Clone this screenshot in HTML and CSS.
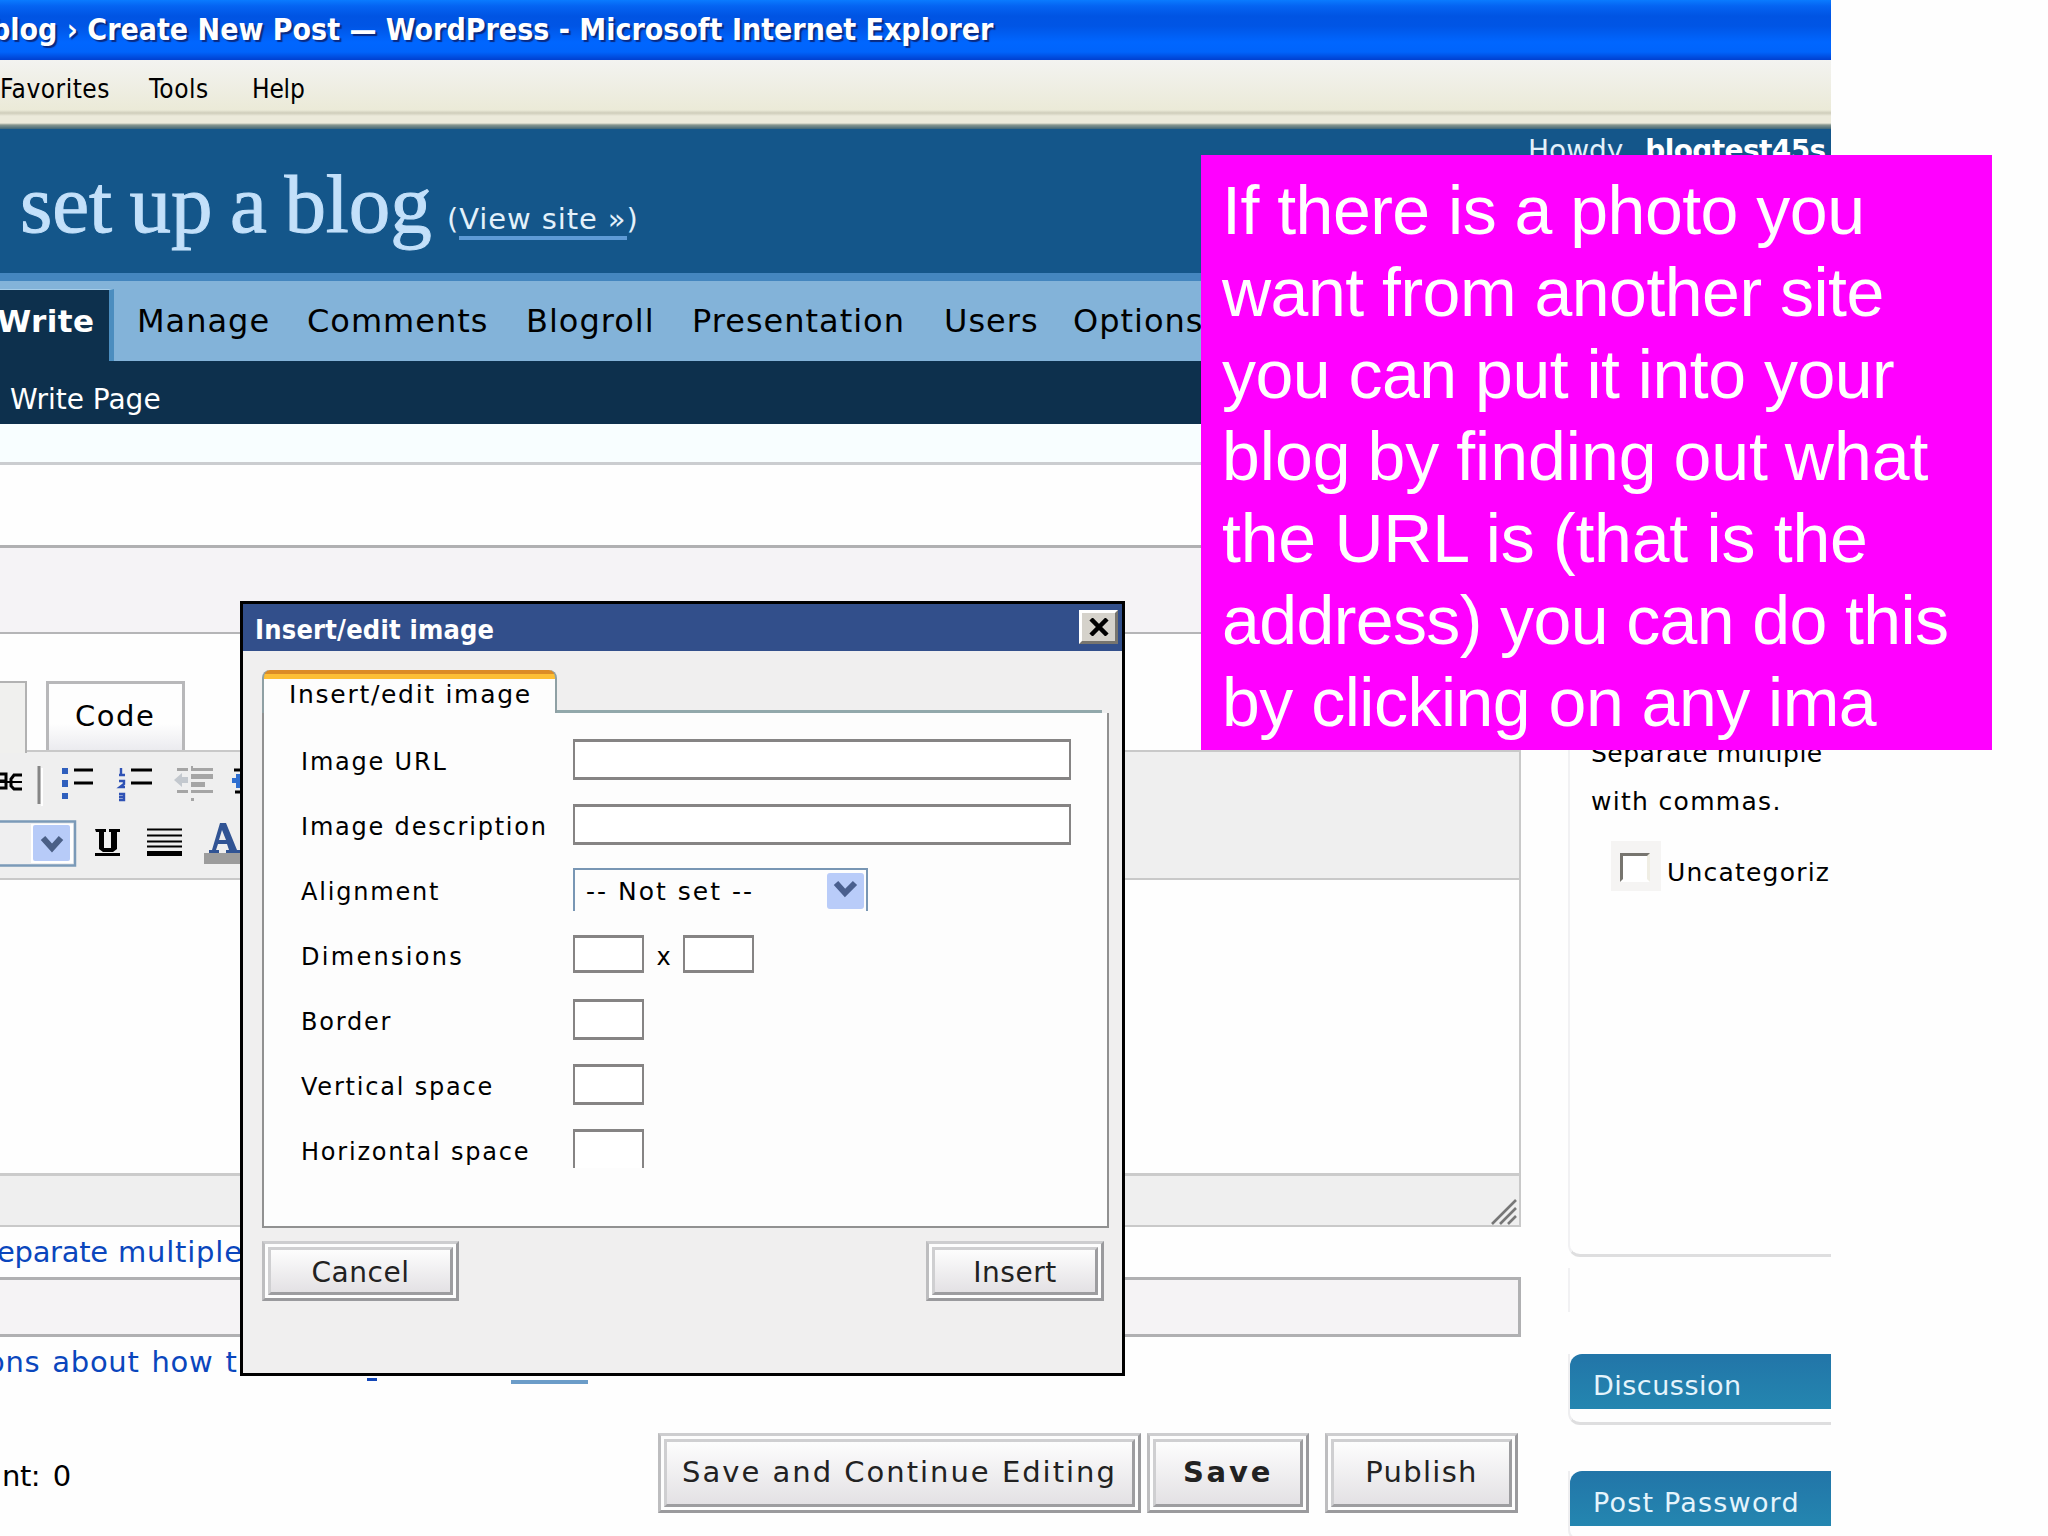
FILE: index.html
```html
<!DOCTYPE html>
<html lang="en">
<head>
  <meta charset="UTF-8">
  <title>Create New Post - WordPress</title>
  <link rel="stylesheet" href="styles.css">
</head>
<body>
  <div class="browser">
    <div class="titlebar"><span>blog › Create New Post — WordPress - Microsoft Internet Explorer</span></div>
    <div class="menubar">
      <span class="m-fav">Favorites</span>
      <span class="m-tools">Tools</span>
      <span class="m-help">Help</span>
    </div>

    <div class="wp-head">
      <h1>o set up a blog</h1>
      <div class="view">(<a>View site »</a>)</div>
      <div class="user">Howdy, <b>blogtest45s</b></div>
    </div>
    <div class="nav">
      <span class="current">Write</span>
      <span class="n1">Manage</span>
      <span class="n2">Comments</span>
      <span class="n3">Blogroll</span>
      <span class="n4">Presentation</span>
      <span class="n5">Users</span>
      <span class="n6">Options</span>
    </div>
    <div class="subnav">Write Page</div>

    <div class="tint"></div>
    <div class="gap-row"></div>
    <div class="title-row"></div>

    <div class="columns">
      <div class="main">
        <div class="tabs">
          <div class="tab-visual"></div>
          <div class="tab-code">Code</div>
        </div>
        <div class="editor">
          <div class="toolbar">
            <svg class="tools" width="240" height="126" viewBox="0 752 240 126">
              <!-- strikethrough -->
              <g fill="none" stroke="#000" stroke-width="3">
                <path d="M0 774h6v14H0M0 781h7M22 775h-8l-3 4v7l3 3h8"/>
                <path d="M0 782h22" stroke-width="2"/>
              </g>
              <path d="M39 766v38" stroke="#858585" stroke-width="3"/>
              <path d="M42 768v38" stroke="#fff" stroke-width="2"/>
              <!-- bullet list -->
              <g fill="#2f5fbd"><rect x="62" y="768" width="6" height="6"/><rect x="62" y="780" width="6" height="7"/><rect x="62" y="793" width="6" height="6"/></g>
              <path d="M74 770h19M74 783h19" stroke="#000" stroke-width="3"/>
              <!-- numbered list -->
              <path d="M121 768v8M119 775h6M119 781h5v3l-4 3h5M119 794h5v6h-5M119 797h5" fill="none" stroke="#2f52b5" stroke-width="2.4"/>
              <path d="M131 770h21M131 783h21" stroke="#000" stroke-width="3"/>
              <!-- outdent -->
              <g fill="#a5a5a5"><rect x="177" y="768" width="11" height="3"/><rect x="191" y="768" width="22" height="3"/><rect x="191" y="774" width="22" height="5"/><rect x="191" y="782" width="14" height="5"/><rect x="177" y="790" width="11" height="3"/><rect x="191" y="790" width="22" height="3"/><rect x="191" y="766" width="2" height="3"/><rect x="191" y="798" width="3" height="3"/></g>
              <path d="M174 780l8-7v4h6v6h-6v4z" fill="#c3c8ce"/>
              <!-- indent, partly under the dialog -->
              <path d="M234 770h6M235 792h5" stroke="#000" stroke-width="3"/>
              <path d="M232 778h4v-4h4v14h-4v-5h-4z" fill="#2f6fd0"/>
              <!-- font select -->
              <path d="M0 821.5h75v44H0" fill="#efeff0" stroke="#7b9ab8" stroke-width="2.5"/>
              <rect x="31" y="824" width="42" height="39" fill="#fff"/>
              <rect x="33" y="825" width="37" height="36" rx="2" fill="#b7cbf8"/>
              <path d="M43 838l9 10 9-10" fill="none" stroke="#4a5f86" stroke-width="6"/>
              <!-- underline -->
              <path d="M95 829h11v3h-2v16h7v-16h-2v-3h11v3h-3v17l-4 3h-10l-4-3v-17h-3zM95 853h25v3H95z" fill="#000"/>
              <!-- justify -->
              <path d="M147 829.500h35M147 835.500h35M147 841.500h35M147 846.500h35" stroke="#000" stroke-width="2"/>
              <path d="M147 853.500h35" stroke="#000" stroke-width="5"/>
              <!-- text colour -->
              <path d="M220 823h6l11 27h3v3h-14v-3h3l-2-6h-9l-2 6h3v3h-10v-3h3zM222 830l-3 10h7z" fill="#315494" fill-rule="evenodd"/>
              <rect x="204" y="853" width="36" height="11" fill="#9c9c9c"/>
            </svg>
          </div>
          <div class="text-area"></div>
          <div class="status">
            <svg width="28" height="28" viewBox="0 0 28 28"><path d="M2 27L26 3M10 27L26 11M18 27l8-8" stroke="#777" stroke-width="2.6"/></svg>
          </div>
        </div>
        <div class="hint hint-tags"><span class="h1a">eparate</span><span class="h1b">multiple</span></div>
        <div class="tags-input"></div>
        <div class="hint hint-ping"><span>ons</span><span>about</span><span>how</span><span>t</span></div>
        <div class="ping-rest"><i class="descender"></i><i class="link-line"></i></div>
        <div class="submit">
          <span class="count"><span>nt:</span> <span class="num">0</span></span>
          <div class="btn b-cont"><span>Save and Continue Editing</span></div>
          <div class="btn b-save"><span>Save</span></div>
          <div class="btn b-pub"><span>Publish</span></div>
        </div>
      </div>

      <div class="side">
        <div class="cats">
          <p>Separate multiple</p>
          <p class="commas">with commas.</p>
          <div class="cat"><span class="check"><i></i></span><span class="cat-name">Uncategoriz</span></div>
        </div>
        <div class="side-stub"></div>
        <div class="box"><div class="box-title"><span class="d1">Discussion</span></div></div>
        <div class="box"><div class="box-title"><span class="d2">Post Password</span></div></div>
      </div>
    </div>
  </div>

  <div class="dialog">
    <div class="dialog-title">
      <span>Insert/edit image</span>
      <div class="close"><svg width="20" height="18" viewBox="0 0 20 18"><path d="M2 1l16 16M18 1L2 17" stroke="#000" stroke-width="4.500"/></svg></div>
    </div>
    <div class="dialog-tabs">
      <div class="dtab"><span>Insert/edit image</span></div>
      <div class="dline"></div>
    </div>
    <div class="panel">
      <div class="row"><label>Image URL</label><div class="input wide"></div></div>
      <div class="row"><label>Image description</label><div class="input wide"></div></div>
      <div class="row"><label>Alignment</label>
        <div class="select"><span>-- Not set --</span>
          <svg width="37" height="36" viewBox="0 0 37 36"><rect width="37" height="36" rx="3" fill="#b9ccf9"/><path d="M9 10l9 10 10-10" fill="none" stroke="#4a5f8e" stroke-width="6"/></svg>
        </div>
      </div>
      <div class="row"><label class="wider">Dimensions</label><div class="input small dim"></div><span class="x">x</span><div class="input small dim"></div></div>
      <div class="row"><label>Border</label><div class="input small"></div></div>
      <div class="row"><label>Vertical space</label><div class="input small"></div></div>
      <div class="row"><label>Horizontal space</label><div class="input small open"></div></div>
    </div>
    <div class="dialog-buttons">
      <div class="btn b-cancel"><span>Cancel</span></div>
      <div class="btn b-insert"><span>Insert</span></div>
    </div>
  </div>

  <div class="note">
    <div>If there is a photo you</div>
    <div>want from another site</div>
    <div>you can put it into your</div>
    <div class="t4">blog by finding out what</div>
    <div class="t5">the URL is (that is the</div>
    <div class="t6">address) you can do this</div>
    <div>by clicking on any ima</div>
  </div>
</body>
</html>
```
FILE: styles.css
```css
* { box-sizing: border-box; }
body {
  margin: 0;
  width: 2048px;
  height: 1536px;
  position: relative;
  overflow: hidden;
  background: #fefefe;
  color: #000;
  font-family: "DejaVu Sans", Verdana, sans-serif;
  white-space: nowrap;
}
.browser {
  width: 1831px;
  height: 1536px;
  overflow: hidden;
}
.titlebar {
  height: 60px;
  background: linear-gradient(#0a7bff 0, #0564f2 6px, #0054e3 16px, #0055e5 26px, #0066ff 42px, #0064fb 52px, #0040d0 60px);
  color: #fff;
  font-family: "DejaVu Sans Condensed", "DejaVu Sans", sans-serif;
  font-stretch: condensed;
  font-size: 30px;
  font-weight: bold;
  line-height: 60px;
  text-shadow: 2px 2px 1px #0a2a80;
}
.titlebar span {
  margin-left: -9px;
}
.menubar {
  height: 69px;
  background: linear-gradient(to bottom, rgba(236,233,216,0) 0, #ebead8 50px, #cfcdbb 53px, #eceadb 56px, #eceadb 63px, #87968f 65px, #3f6678 69px), #f3f3f1;
  display: flex;
  font-family: "DejaVu Sans Condensed", "DejaVu Sans", sans-serif;
  font-stretch: condensed;
  font-size: 26px;
  line-height: 58px;
  letter-spacing: 0.5px;
}
.menubar span { display: block; }
.m-fav { width: 149px; }
.m-tools { width: 103px; }
.menubar .m-help { letter-spacing: -0.2px; }

.wp-head {
  height: 144px;
  background: #14568a;
  display: flex;
  color: #c3e0fa;
}
.wp-head h1 {
  margin: 0 0 0 -39px;
  width: 486px;
  font: 83px/151px "Liberation Serif", serif;
  letter-spacing: -0.1px;
  word-spacing: -3px;
  -webkit-text-stroke: 1px #c3e0fa;
}
.view {
  width: 1081px;
  padding-top: 73px;
  font-size: 29px;
  line-height: 34px;
  letter-spacing: 0.9px;
  color: #e3f1fb;
}
.view a {
  display: inline-block;
  height: 38px;
  border-bottom: 4px solid #5f9bd6;
}
.user {
  font-size: 28px;
  line-height: 43px;
  color: #e3f1fb;
}
.user b {
  color: #fff;
  margin-left: 4px;
  letter-spacing: -0.6px;
}
.nav {
  height: 88px;
  border-top: 8px solid #4486bf;
  background: #83b3d9;
  display: flex;
  font-size: 32px;
  line-height: 80px;
  letter-spacing: 1px;
}
.nav .current {
  width: 114px;
  height: 72px;
  margin: 8px 23px 0 0;
  background: #0d304d;
  border-top: 1px solid #a5cce8;
  border-right: 5px solid #4b8dbf;
  color: #fff;
  font-size: 31px;
  font-weight: bold;
  letter-spacing: 0.4px;
  text-indent: -3px;
  line-height: 62px;
}
.n1 { width: 170px; }
.n2 { width: 219px; }
.n3 { width: 166px; }
.n4 { width: 252px; }
.n5 { width: 129px; }
.subnav {
  height: 63px;
  padding-left: 10px;
  background: #0d304d;
  color: #fff;
  font-size: 28px;
  line-height: 78px;
}
.tint {
  height: 41px;
  background: #f8feff;
  border-bottom: 3px solid #cbcdd0;
}
.gap-row { height: 80px; }
.title-row {
  height: 89px;
  background: #f5f3f6;
  border-top: 3px solid #b0b0b2;
  border-bottom: 2px solid #b5b5b7;
}

.columns { display: flex; }
.main { width: 1521px; }
.tabs {
  height: 116px;
  padding-top: 47px;
  display: flex;
}
.tab-visual {
  width: 27px;
  height: 72px;
  margin-right: 19px;
  border: 2px solid #b2b2b2;
  border-left: 0;
  border-bottom: 0;
  background: #f0f0ee;
  z-index: 1;
}
.tab-code {
  width: 139px;
  height: 69px;
  padding-left: 26px;
  border: 3px solid #b8b8ba;
  border-bottom: 0;
  background: linear-gradient(#fefefe 60%, #ebebef);
  font-size: 29px;
  letter-spacing: 1.5px;
  line-height: 65px;
}
.editor {
  border: 2px solid #c9c9c9;
  border-left: 0;
  height: 477px;
}
.toolbar {
  height: 128px;
  background: #efefef;
  border-bottom: 2px solid #c9c9c9;
}
.tools { display: block; }
.text-area { height: 293px; }
.status {
  height: 52px;
  background: #efefef;
  border-top: 3px solid #cbcbcb;
  display: flex;
  justify-content: flex-end;
  align-items: flex-end;
  padding-right: 1px;
}
.hint {
  display: flex;
  font-size: 29px;
  color: #0a46bd;
}
.hint-tags {
  height: 50px;
  line-height: 51px;
}
.h1a {
  width: 121px;
  margin-left: -3px;
  letter-spacing: -0.3px;
}
.h1b { letter-spacing: 0.8px; }
.tags-input {
  height: 60px;
  background: #f5f3f5;
  border: 3px solid #b0b0b2;
  border-left: 0;
}
.hint-ping {
  height: 39px;
  margin-left: -13px;
  line-height: 50px;
  letter-spacing: 0.7px;
  gap: 12px;
}
.ping-rest {
  height: 57px;
  display: flex;
  padding: 2px 0 0 367px;
}
.descender { width: 10px; height: 3px; background: #1347b8; }
.link-line { width: 77px; height: 4px; margin: 2px 0 0 134px; background: #6b9cc8; }
.submit {
  display: flex;
  height: 80px;
}
.count {
  width: 658px;
  padding-left: 2px;
  font-size: 29px;
  letter-spacing: -0.5px;
  line-height: 87px;
}
.num { margin-left: 4px; }
.btn {
  flex: none;
  display: flex;
  border: 3px solid #9a9a9d;
  border-top-color: #cdcdcf;
  border-left-color: #bdbdbf;
  background: #fdfdfd;
  padding: 3px;
  color: #222;
  font-size: 29px;
}
.btn span {
  flex: 1;
  border: 3px solid #9d9da0;
  border-top-color: #cfcfd1;
  border-left-color: #cfcfd1;
  background: linear-gradient(#fdfdfd, #e3e1e4);
  text-align: center;
}
.submit .btn { line-height: 61px; }
.b-cont { width: 483px; margin-right: 6px; letter-spacing: 2px; }
.b-save { width: 162px; margin-right: 16px; font-weight: bold; letter-spacing: 2.8px; }
.b-pub { width: 193px; letter-spacing: 1.3px; }

.side {
  width: 263px;
  margin-left: 47px;
  overflow: hidden;
}
.cats {
  height: 623px;
  width: 300px;
  padding: 96px 0 0 21px;
  border-left: 2px solid #f1f1f3;
  border-bottom: 3px solid #dededf;
  border-bottom-left-radius: 12px;
  font-size: 25px;
  letter-spacing: 0.5px;
}
.cats p { margin: 0; line-height: 48px; }
.cats .commas { letter-spacing: 1.3px; }
.cat {
  display: flex;
  margin: 15px 0 0 20px;
  line-height: 64px;
}
.check {
  width: 50px;
  height: 50px;
  padding: 12px 9px;
  background: #f5f4f3;
}
.check i {
  display: block;
  width: 30px;
  height: 29px;
  border: 3px solid #77756f;
  border-right-color: #f0eee4;
  border-bottom-color: #fff;
  background: #fff;
}
.cat-name { margin-left: 6px; letter-spacing: 1.2px; }
.side-stub {
  height: 44px;
  margin: 11px 0 42px;
  border-left: 2px solid #f1f1f3;
}
.box {
  width: 300px;
  height: 71px;
  margin-bottom: 46px;
  border-left: 2px solid #eeeef0;
  border-bottom: 3px solid #dededf;
  border-bottom-left-radius: 12px;
}
.box-title {
  height: 55px;
  padding-left: 23px;
  border-top-left-radius: 12px;
  background: linear-gradient(#2275a8, #2486b0);
  color: #e5f4fc;
  font-size: 27px;
  line-height: 63px;
}
.d1 { letter-spacing: 0.5px; }
.d2 { letter-spacing: 1.2px; }

/* dialog floats over the editor */
.dialog {
  position: absolute;
  left: 240px;
  top: 601px;
  width: 885px;
  height: 775px;
  border: 3px solid #000;
  background: #f0efef;
}
.dialog-title {
  height: 47px;
  padding: 0 4px 0 12px;
  background: #324f8b;
  color: #fff;
  font-family: "DejaVu Sans Condensed", "DejaVu Sans", sans-serif;
  font-stretch: condensed;
  font-size: 27px;
  font-weight: bold;
  line-height: 51px;
  letter-spacing: 0.2px;
  display: flex;
  justify-content: space-between;
}
.close {
  width: 39px;
  height: 34px;
  margin-top: 6px;
  border: 3px solid #fff;
  border-right-color: #77756f;
  border-bottom-color: #77756f;
  background: #d5d2cb;
  display: flex;
  align-items: center;
  justify-content: center;
}
.dialog-tabs {
  height: 62px;
  padding: 19px 20px 0 19px;
  display: flex;
  align-items: flex-end;
}
.dtab {
  width: 295px;
  height: 43px;
  border: 2px solid #8fa0a4;
  border-top: 0;
  border-bottom: 0;
  border-radius: 8px 8px 0 0;
  background: linear-gradient(#dc8c26 4px, #fdbf36 4px, #fdbf36 9px, #fdfdfd 9px);
  padding-left: 25px;
  font-size: 25px;
  letter-spacing: 1.7px;
  line-height: 49px;
}
.dline { flex: 1; height: 3px; background: #92a8ab; }
.panel {
  width: 847px;
  height: 515px;
  margin-left: 19px;
  padding: 22px 0 0 37px;
  border: 2px solid #919191;
  border-top: 0;
  background: #fdfdfd;
  font-size: 24px;
  letter-spacing: 1.8px;
}
.row {
  height: 65px;
  display: flex;
  padding-top: 4px;
}
.row label {
  width: 272px;
  flex: none;
  line-height: 46px;
}
.row .wider { letter-spacing: 2.3px; }
.input {
  height: 41px;
  border: 3px solid #868484;
  border-left-width: 2px;
  border-right-width: 2px;
  background: #fff;
}
.wide { width: 498px; }
.small { width: 71px; }
.dim { height: 38px; margin-top: 1px; }
.open { border-bottom: 0; height: 39px; }
.x { width: 39px; padding-left: 2px; text-align: center; line-height: 47px; }
.select {
  width: 295px;
  height: 43px;
  margin-top: -1px;
  padding: 3px 2px 0 11px;
  border: 2px solid #7896b4;
  border-bottom: 0;
  display: flex;
  justify-content: space-between;
  font-size: 25px;
  letter-spacing: 2px;
  line-height: 38px;
}
.dialog-buttons {
  padding: 13px 18px 0 19px;
  display: flex;
  justify-content: space-between;
}
.dialog-buttons .btn {
  height: 60px;
  line-height: 46px;
  font-size: 28px;
  letter-spacing: 0.5px;
}
.b-cancel { width: 197px; }
.b-insert { width: 178px; }

/* callout over the page */
.note {
  position: absolute;
  left: 1201px;
  top: 155px;
  width: 791px;
  height: 595px;
  padding: 14px 0 0 21px;
  background: #f0f;
  color: #fff;
  font: 68px/82px "Liberation Sans", Arial, sans-serif;
  letter-spacing: -0.5px;
}
/* no letter-spacing here, it would break the fi ligature */
.note .t4 { letter-spacing: 0; word-spacing: -2px; }
.note .t5 { letter-spacing: -0.25px; }
.note .t6 { letter-spacing: -0.6px; }
```
